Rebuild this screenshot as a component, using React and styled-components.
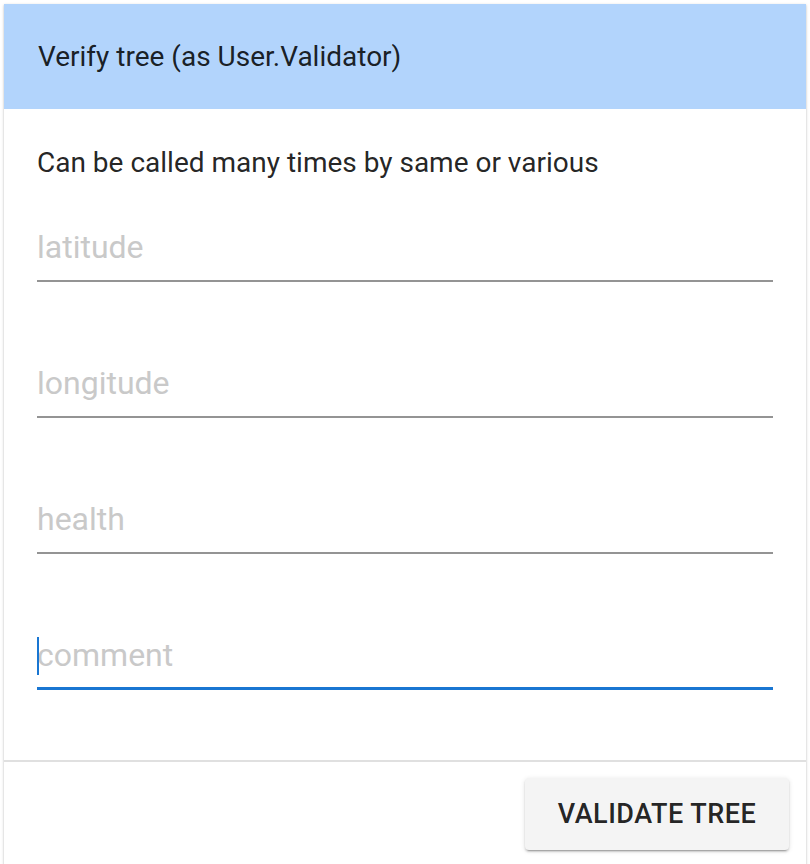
import React from "react";
import styled, { createGlobalStyle } from "styled-components";

const Global = createGlobalStyle`
  html, body { margin: 0; padding: 0; background: #ffffff; }
  body { font-family: Roboto, "Liberation Sans", sans-serif; overflow: hidden; }
`;

const Page = styled.div`
  padding: 4px 4px 0 4px;
  height: 864px;
  box-sizing: border-box;
`;

const Card = styled.div`
  width: 802px;
  height: 880px;
  background: #fff;
  box-shadow: 0 1px 3px rgba(0,0,0,0.2), 0 1px 1px rgba(0,0,0,0.14), 0 2px 1px -1px rgba(0,0,0,0.12);
  display: flex;
  flex-direction: column;
`;

const Header = styled.div`
  height: 105px;
  background: #b2d4fc;
  display: flex;
  align-items: center;
  padding: 0 34px;
  box-sizing: border-box;
`;

const Title = styled.h2`
  margin: 0;
  font-family: Roboto, "Liberation Sans", sans-serif;
  font-weight: 400;
  font-size: 28px;
  color: rgba(0,0,0,0.87);
  letter-spacing: 0;
`;

const Content = styled.div`
  padding: 32px 33px 0 33px;
  height: 651px;
  box-sizing: border-box;
`;

const Description = styled.p`
  margin: 0;
  font-size: 28px;
  line-height: 44px;
  color: rgba(0,0,0,0.87);
  letter-spacing: 0;
`;

const Field = styled.div`
  margin-top: ${p => p.$first ? "19px" : "58px"};
  width: 736px;
  height: 78px;
  position: relative;
  display: flex;
  align-items: flex-start;
  border-bottom: ${p => p.$focused ? "3px solid #1976d2" : "2px solid #949494"};
  box-sizing: border-box;
`;

const Input = styled.input`
  border: none;
  outline: none;
  background: transparent;
  width: 100%;
  padding: 17px 0 0 0;
  margin: 0;
  font-family: Roboto, "Liberation Sans", sans-serif;
  font-size: 32px;
  line-height: 52px;
  height: 69px;
  box-sizing: border-box;
  color: rgba(0,0,0,0.87);
  caret-color: #1976d2;
  &::placeholder { color: #c9c9c9; opacity: 1; }
`;

const Caret = styled.span`
  position: absolute;
  left: 0;
  top: 25px;
  width: 2px;
  height: 38px;
  background: #1976d2;
`;

const Divider = styled.div`
  height: 2px;
  background: #e0e0e0;
`;

const Actions = styled.div`
  display: flex;
  justify-content: flex-end;
  padding: 16px 17px 0 0;
`;

const Button = styled.button`
  width: 264px;
  height: 72px;
  border: none;
  border-radius: 4px;
  background: #f4f4f4;
  box-shadow: 0 3px 1px -2px rgba(0,0,0,0.2), 0 2px 2px 0 rgba(0,0,0,0.14), 0 1px 5px 0 rgba(0,0,0,0.12);
  font-family: Roboto, "Liberation Sans", sans-serif;
  font-weight: 500;
  font-size: 27px;
  letter-spacing: 0.5px;
  color: rgba(0,0,0,0.87);
  text-transform: uppercase;
  padding: 0;
`;

const fields = ["latitude", "longitude", "health", "comment"];

export default function App() {
  return (
    <>
      <Global />
      <Page>
        <Card>
          <Header>
            <Title>Verify tree (as User.Validator)</Title>
          </Header>
          <Content>
            <Description>Can be called many times by same or various</Description>
            {fields.map((f, i) => (
              <Field key={f} $first={i === 0} $focused={f === "comment"}>
                {f === "comment" && <Caret />}
                <Input placeholder={f} />
              </Field>
            ))}
          </Content>
          <Divider />
          <Actions>
            <Button>Validate tree</Button>
          </Actions>
        </Card>
      </Page>
    </>
  );
}
